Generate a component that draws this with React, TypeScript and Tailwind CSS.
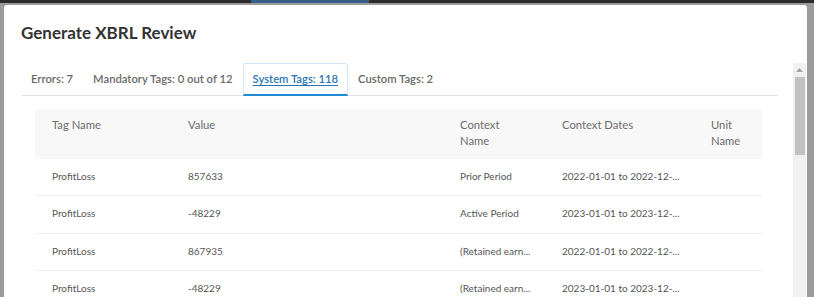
import React from 'react';

const tabs = [
  { label: 'Errors: 7', active: false },
  { label: 'Mandatory Tags: 0 out of 12', active: false },
  { label: 'System Tags: 118', active: true },
  { label: 'Custom Tags: 2', active: false },
];

// cells are cut the same way the app shows them
const rows = [
  { tag: 'ProfitLoss', value: '857633', context: 'Prior Period', dates: '2022-01-01 to 2022-12-...' },
  { tag: 'ProfitLoss', value: '-48229', context: 'Active Period', dates: '2023-01-01 to 2023-12-...' },
  { tag: 'ProfitLoss', value: '867935', context: '(Retained earn...', dates: '2022-01-01 to 2022-12-...' },
  { tag: 'ProfitLoss', value: '-48229', context: '(Retained earn...', dates: '2023-01-01 to 2023-12-...' },
];

const cols = 'grid grid-cols-[136px_272px_102px_149px_68px]';

export default function App() {
  return (
    <div className="w-[814px] h-[297px] overflow-hidden bg-[#9b9b9b] font-['Lato',sans-serif]">
      {/* page bar behind the overlay */}
      <div className="h-[3px] flex bg-[#2c2c2c]">
        <div className="w-[251px]" />
        <div className="w-[118px] bg-[#3b5f86]" />
      </div>

      <div className="flex mt-[2px]">
        <div className="w-[4px]" />
        <div className="w-[803px] bg-white rounded-t-[3px]">
          <h1 className="pl-[17px] pt-[16px] text-[17px] leading-[24px] font-bold text-[#333333]">Generate XBRL Review</h1>

          <div className="flex mt-[18px]">
            <div className="flex-1 pl-[17px] pr-[15px]">
              {/* tabs */}
              <div className="flex h-[33px] border-b border-[#e2e2ee]">
                {tabs.map(t => (
                  <div
                    key={t.label}
                    className={
                      t.active
                        ? 'px-[9px] h-[33px] mb-[-1px] flex items-center border border-[#d3e6f5] border-b-2 border-b-[#1f8ad6] rounded-t-[3px] text-[11.25px] font-semibold text-[#2a76b5] underline underline-offset-2'
                        : 'px-[10px] h-[33px] flex items-center text-[11.25px] font-semibold text-[#6a6a6a]'
                    }
                  >
                    {t.label}
                  </div>
                ))}
              </div>

              {/* table */}
              <div className="ml-[14px] mt-[13px] w-[727px]">
                <div className={`${cols} bg-[#f8f8f8] h-[50px] pt-[8px] text-[11.25px] leading-[16px] text-[#6c6c6c]`}>
                  <div className="px-[17px]">Tag Name</div>
                  <div className="px-[17px]">Value</div>
                  <div className="px-[17px]">Context Name</div>
                  <div className="px-[17px]">Context Dates</div>
                  <div className="px-[17px]">Unit Name</div>
                </div>
                {rows.map((r, i) => (
                  <div key={i} className={`${cols} h-[37.33px] pt-[10px] leading-[14px] border-b border-[#eeeeee] text-[10px] text-[#555555]`}>
                    <div className="px-[17px] whitespace-nowrap">{r.tag}</div>
                    <div className="px-[17px] whitespace-nowrap">{r.value}</div>
                    <div className="pl-[17px] whitespace-nowrap">{r.context}</div>
                    <div className="pl-[17px] whitespace-nowrap">{r.dates}</div>
                    <div className="px-[17px]" />
                  </div>
                ))}
              </div>
            </div>

            {/* scrollbar */}
            <div className="w-[13px] mr-[1px] bg-[#f1f1f1] flex flex-col items-center">
              <div className="h-[14px] flex items-center justify-center">
                <svg width="7" height="4" viewBox="0 0 7 4"><path d="M0 4 L3.5 0 L7 4 Z" fill="#a3a3a3" /></svg>
              </div>
              <div className="w-[10px] h-[78px] bg-[#c1c1c1]" />
              <div className="h-[200px]" />
            </div>
          </div>
        </div>
      </div>
    </div>
  );
}
